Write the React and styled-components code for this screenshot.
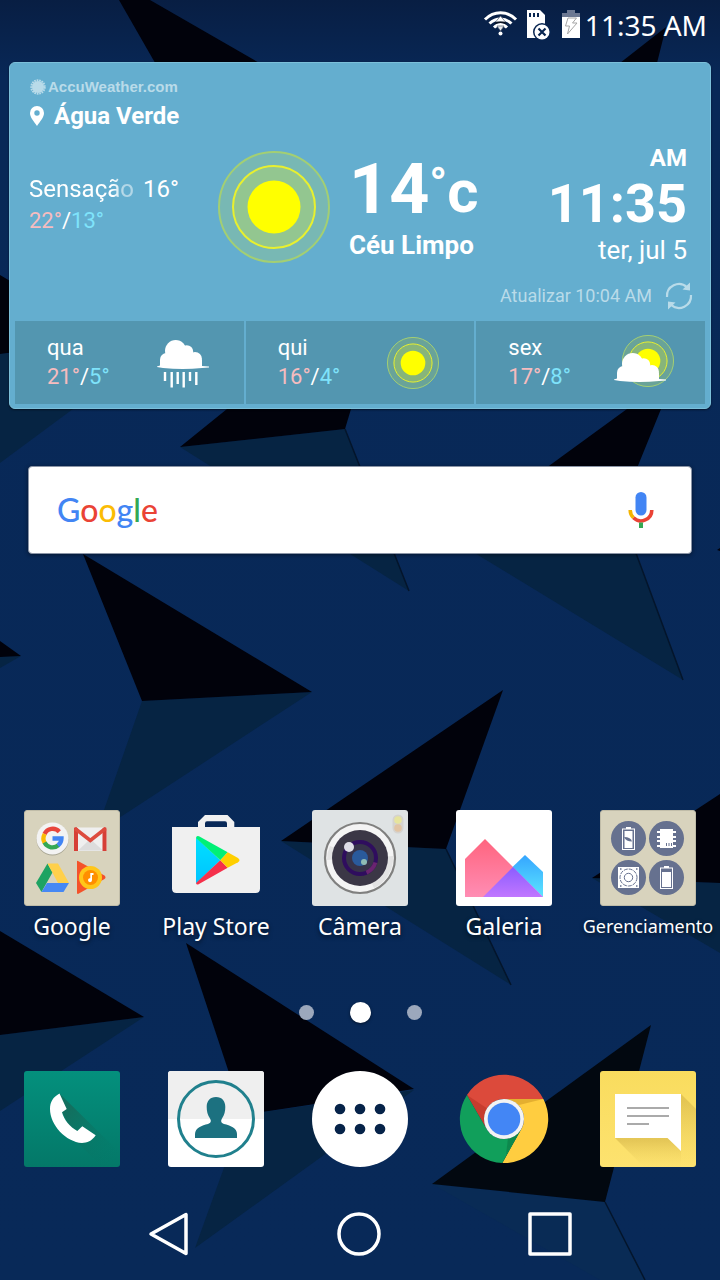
import React from 'react';
import styled, { createGlobalStyle } from 'styled-components';

const GlobalStyle = createGlobalStyle`
  *, *::before, *::after { box-sizing: border-box; }
  body { margin: 0; background: #082957; }
  button, input { font: inherit; color: inherit; border: 0; padding: 0; background: none; }
  button { cursor: pointer; }
  a { color: inherit; text-decoration: none; }
  svg { display: block; overflow: visible; }
`;

const Screen = styled.div`
  position: relative;
  min-height: 100vh;
  display: flex;
  flex-direction: column;
  overflow: hidden;
  color: #fff;
  font-family: Roboto, "Noto Sans", sans-serif;
  isolation: isolate;
`;

const WallpaperArt = styled.svg`
  position: absolute;
  inset: 0;
  width: 100%;
  height: 100%;
  z-index: -1;
`;

function Wallpaper() {
  return (
    <WallpaperArt viewBox="0 0 720 1280" preserveAspectRatio="xMidYMid slice" aria-hidden="true">
      <defs>
        <linearGradient id="night" x1="0" y1="0" x2="0" y2="1">
          <stop offset="0" stopColor="#081e43" />
          <stop offset="0.06" stopColor="#082857" />
          <stop offset="1" stopColor="#082958" />
        </linearGradient>
      </defs>
      <rect width="720" height="1280" fill="url(#night)" />
      <g fill="#062443">
        <path d="M0 354L110 346L150 352L73 409L0 463Z" />
        <path d="M180 447L345 429L409 591Z" />
        <path d="M450 538L620 510L683 680Z" />
        <path d="M0 657L21 656L0 668Z" />
        <path d="M142 701L312 692L96 833Z" />
        <path d="M281 841L446 849L511 985Z" />
        <path d="M592 878L720 883V953Z" />
        <path d="M0 1035L144 1017L0 1111Z" />
        <path d="M243 1115L414 1090L195 1248Z" />
      </g>
      <path d="M432 1184L605 1202L645 1280H600Z" fill="#092b55" />
      <g fill="#01020b">
        <path d="M119 0H150L268 68H158Z" />
        <path d="M666 27L620 63H657Z" />
        <path d="M0 275L110 340L0 354Z" />
        <path d="M180 447L227 409H351L345 429Z" />
        <path d="M450 538L627 409H661L620 510Z" />
        <path d="M0 641L21 656L0 657Z" />
        <path d="M720 548L717 550L720 551Z" />
        <path d="M83 554L312 692L142 701Z" />
        <path d="M503 690L446 849L281 841Z" />
        <path d="M720 794V883L592 878Z" />
        <path d="M0 931L144 1017L0 1035Z" />
        <path d="M186 943L414 1089L243 1115Z" />
        <path d="M651 1025L605 1202L432 1184Z" fill="#020810" />
      </g>
      <g fill="none" stroke="#04152b" strokeWidth="1.5">
        <path d="M345 429L409 591M620 510L683 680M446 849L511 985M605 1202L645 1280" />
      </g>
    </WallpaperArt>
  );
}

/* ---------- status bar ---------- */

const StatusBar = styled.header`
  height: 50px;
  padding-right: 13px;
  display: flex;
  align-items: center;
  justify-content: flex-end;
`;

const StatusIcon = styled.svg`
  width: ${(p) => p.$w}px;
  height: 30px;
  margin-right: ${(p) => p.$gap}px;
`;

const StatusTime = styled.time`
  font: 28px/38px "Noto Sans", sans-serif;
`;

function Status() {
  return (
    <StatusBar>
      <StatusIcon $w={33} $gap={10} viewBox="0 0 33 30" role="img" aria-label="Wi-Fi">
        <g fill="none" stroke="#fff" strokeWidth="3">
          <path d="M1 9.500C10 0.500 23 0.500 32 9.500" />
          <path d="M5.500 13.500C12 7.500 21 7.500 27.500 13.500" />
          <path d="M10 17.500C14 13.500 19 13.500 23 17.500" />
        </g>
        <path d="M11.500 12L16.500 6L21.500 12Z" fill="#fff" stroke="#555f70" strokeWidth="0.7" />
        <path d="M13 16L16.500 21L20 16Z" fill="#e9ebef" stroke="#555f70" strokeWidth="0.7" />
        <path d="M11 13.500Q16.500 11 22 13.500" stroke="#0a1220" strokeWidth="1.600" fill="none" />
        <circle cx="16.500" cy="23.500" r="2" fill="#fff" />
      </StatusIcon>
      <StatusIcon $w={24} $gap={11} viewBox="0 0 24 30" role="img" aria-label="Sem cartão SD">
        <path d="M0 0H13L18 5V28H0Z" fill="#fff" />
        <path d="M3 3V7M7 3V7M11 3V7" stroke="#082550" strokeWidth="2" />
        <circle cx="15" cy="22" r="9" fill="#082550" />
        <circle cx="15" cy="22" r="7.500" fill="#fff" />
        <path d="M11.500 18.500L18.500 25.500M18.500 18.500L11.500 25.500" stroke="#082550" strokeWidth="2.200" />
      </StatusIcon>
      <StatusIcon $w={18} $gap={5} viewBox="0 0 18 30" role="img" aria-label="Bateria carregando">
        <path d="M5 0H13V3H18V7H0V3H5Z" fill="#6c7892" />
        <path d="M0 7H18V28H0Z" fill="#fff" />
        <path d="M6 8L3.500 16H7.500L5.500 24L15 13H10.500L14.500 8Z" fill="none" stroke="#a6a6a6" strokeWidth="1" />
      </StatusIcon>
      <StatusTime dateTime="11:35">11:35 AM</StatusTime>
    </StatusBar>
  );
}

/* ---------- weather widget ---------- */

const WeatherCard = styled.section`
  margin: 12px 9px 0;
  padding: 15px 5px 4px;
  border: 1px solid #7cc0da;
  border-radius: 6px;
  background: #64aecf;
  box-shadow: 0 1px 2px rgba(0, 0, 0, 0.5);
`;

const Brand = styled.a`
  display: flex;
  align-items: center;
  gap: 2px;
  margin-left: 15px;
  color: #b9dbe9;
  font: bold 15px/18px "Liberation Sans", sans-serif;
`;

const Place = styled.h1`
  margin: 4px 0 0 14px;
  display: flex;
  align-items: center;
  gap: 9px;
  font-size: 24px;
  line-height: 32px;
  font-weight: 700;
`;

const Now = styled.div`
  margin-top: 12px;
  padding: 0 18px 0 14px;
  min-height: 120px;
  display: flex;
`;

const Feels = styled.div`
  width: 189px;
  margin-top: 29px;
  font-size: 24px;
  line-height: 32px;
`;

const FeelsLine = styled.div`
  display: flex;
  gap: 9px;
`;

const FadingText = styled.span`
  mask-image: linear-gradient(to right, #000 80%, rgba(0, 0, 0, 0.5) 90%);
`;

const Range = styled.div`
  font-size: 22px;
`;
const High = styled.span`
  color: #f6bcbf;
`;
const Low = styled.span`
  color: #7fe3fb;
`;

const SunIcon = styled.svg`
  width: ${(p) => p.$size}px;
  height: ${(p) => p.$size}px;
  flex: none;
  align-self: ${(p) => p.$align || 'center'};
`;

const Condition = styled.div`
  margin: 15px 0 0 19px;
`;

const Temperature = styled.div`
  display: flex;
  height: 60px;
  font-size: 70px;
  line-height: 60px;
  font-weight: 700;
`;
const Degree = styled.span`
  font-size: 46px;
  line-height: 50px;
`;
const Unit = styled.span`
  font-size: 60px;
  line-height: 66px;
`;
const ConditionName = styled.p`
  margin: 11px 0 0;
  font-size: 26px;
  line-height: 30px;
  font-weight: 700;
`;

const Clock = styled.div`
  margin-left: auto;
  text-align: right;
  font-weight: 700;
`;
const Meridiem = styled.div`
  font-size: 24px;
  line-height: 28px;
`;
const Hour = styled.div`
  font-size: 54px;
  line-height: 64px;
`;
const Today = styled.div`
  font-size: 26px;
  line-height: 28px;
  font-weight: 400;
`;

const Refresh = styled.button`
  margin: 16px 12px 9px auto;
  display: flex;
  align-items: center;
  gap: 13px;
  color: #b9dbe9;
  font-size: 18px;
  line-height: 32px;
`;

const Forecast = styled.ul`
  list-style: none;
  margin: 0;
  padding: 0;
  display: grid;
  grid-template-columns: repeat(3, 1fr);
  gap: 2px;
`;
const Day = styled.li`
  height: 83px;
  padding: 0 35px 2px 32px;
  display: flex;
  align-items: center;
  justify-content: space-between;
  background: #5396b0;
  font-size: 22px;
  line-height: 29px;
`;

function SunShapes({ cx, cy, k }) {
  return (
    <g>
      <circle cx={cx} cy={cy} r={55 * k} fill="rgba(255,255,0,0.13)" stroke="#a3cf73" strokeWidth={k < 1 ? 1 : 2} />
      <circle cx={cx} cy={cy} r={41 * k} fill="rgba(255,255,0,0.2)" stroke="#e8f02e" strokeWidth={k < 1 ? 1 : 2} />
      <circle cx={cx} cy={cy} r={26.5 * k} fill="#ff0" />
    </g>
  );
}

function CloudShapes() {
  return (
    <g fill="#fff">
      <circle cx="18.700" cy="13.700" r="10.700" />
      <circle cx="29.700" cy="14.700" r="6.500" />
      <circle cx="38" cy="22" r="7" />
      <circle cx="9.500" cy="22.500" r="6.500" />
      <path d="M3 23H45V29L52 29.500V30.500L45 31Q26 33 6 31L0 30V29.500L3 28.500Z" />
      <rect x="12" y="14" width="24" height="12" />
    </g>
  );
}

function DayIcon({ kind }) {
  return (
    <SunIcon $size={52} viewBox="0 0 52 52" aria-hidden="true">
      {kind === 'sun' && <SunShapes cx={26} cy={27} k={0.465} />}
      {kind === 'rain' && (
        <g transform="translate(0 1)">
          <CloudShapes />
          <path
            d="M8 35V44M14.700 35V50.500M20.700 35V47M26.700 35V50.500M33 35V44M39.300 35V48"
            stroke="#fff"
            strokeWidth="2.400"
          />
        </g>
      )}
      {kind === 'partly' && (
        <g>
          <SunShapes cx={30} cy={25} k={0.465} />
          <g transform="translate(-4 14)">
            <CloudShapes />
          </g>
        </g>
      )}
    </SunIcon>
  );
}

const DAYS = [
  { name: 'qua', high: '21°', low: '5°', kind: 'rain' },
  { name: 'qui', high: '16°', low: '4°', kind: 'sun' },
  { name: 'sex', high: '17°', low: '8°', kind: 'partly' },
];

function Weather() {
  return (
    <WeatherCard>
      <Brand href="#accuweather">
        <svg width="16" height="16" viewBox="0 0 16 16" aria-hidden="true">
          <circle cx="8" cy="8" r="6" fill="currentColor" />
          <circle cx="8" cy="8" r="6.700" fill="none" stroke="currentColor" strokeWidth="2" strokeDasharray="1.700 0.800" />
        </svg>
        AccuWeather.com
      </Brand>
      <Place>
        <svg width="16" height="20" viewBox="0 0 16 20" aria-hidden="true">
          <path
            d="M8 0A7 7 0 0 1 15 7C15 11.500 11 15.500 8 20C5 15.500 1 11.500 1 7A7 7 0 0 1 8 0ZM8 4.300A2.700 2.700 0 1 0 8 9.700A2.700 2.700 0 1 0 8 4.300Z"
            fill="#fff"
            fillRule="evenodd"
          />
        </svg>
        Água Verde
      </Place>
      <Now>
        <Feels>
          <FeelsLine>
            <FadingText>Sensação</FadingText>
            <span>16°</span>
          </FeelsLine>
          <Range>
            <High>22°</High>/<Low>13°</Low>
          </Range>
        </Feels>
        <SunIcon $size={112} $align="flex-end" viewBox="0 0 112 112" role="img" aria-label="Sol">
          <SunShapes cx={56} cy={55} k={1} />
        </SunIcon>
        <Condition>
          <Temperature>
            14<Degree>°</Degree>
            <Unit>c</Unit>
          </Temperature>
          <ConditionName>Céu Limpo</ConditionName>
        </Condition>
        <Clock>
          <Meridiem>AM</Meridiem>
          <Hour>11:35</Hour>
          <Today>ter, jul 5</Today>
        </Clock>
      </Now>
      <Refresh type="button">
        Atualizar 10:04 AM
        <svg width="28" height="28" viewBox="0 0 28 28" aria-hidden="true">
          <path d="M2 15A12 12 0 0 1 22 5.200M26 13A12 12 0 0 1 6 22.800" fill="none" stroke="currentColor" strokeWidth="2.200" />
          <path d="M25 0.500V8.500L17.500 7.500ZM3 27.500V19.500L10.500 20.500Z" fill="currentColor" />
        </svg>
      </Refresh>
      <Forecast>
        {DAYS.map((d) => (
          <Day key={d.name}>
            <div>
              {d.name}
              <Range>
                <High>{d.high}</High>/<Low>{d.low}</Low>
              </Range>
            </div>
            <DayIcon kind={d.kind} />
          </Day>
        ))}
      </Forecast>
    </WeatherCard>
  );
}

/* ---------- search ---------- */

const SearchBar = styled.form`
  margin: 57px 28px 0;
  height: 88px;
  padding: 0 37px 0 28px;
  display: flex;
  align-items: center;
  border: 1px solid #8a94a6;
  border-radius: 4px;
  background: #fff;
  box-shadow: 0 1px 4px rgba(0, 0, 0, 0.45);
`;
const Logo = styled.label`
  font: 500 32px/40px Lato, sans-serif;
`;
const Letter = styled.span`
  color: ${(p) => p.$color};
`;
const Query = styled.input`
  flex: 1;
  min-width: 0;
  height: 60px;
  outline: 0;
  color: #333;
`;

const LETTERS = [
  ['G', '#4285f4'],
  ['o', '#ea4335'],
  ['o', '#fbbc05'],
  ['g', '#4285f4'],
  ['l', '#34a853'],
  ['e', '#ea4335'],
];

function Search() {
  return (
    <SearchBar role="search">
      <Logo htmlFor="query">
        {LETTERS.map(([c, color], i) => (
          <Letter key={i} $color={color}>
            {c}
          </Letter>
        ))}
      </Logo>
      <Query id="query" type="text" />
      <button type="button" aria-label="Pesquisa por voz">
        <svg width="26" height="38" viewBox="0 0 26 38" aria-hidden="true">
          <rect x="7.500" y="1" width="11" height="23.500" rx="5.500" fill="#4285f4" />
          <path d="M2.200 19A10.800 10.800 0 0 0 5.500 26.800" fill="none" stroke="#f4b400" strokeWidth="3.600" />
          <path d="M5.500 26.800A10.800 10.800 0 0 0 23.800 19" fill="none" stroke="#ea4335" strokeWidth="3.600" />
          <path d="M13 31.500V37" stroke="#34a853" strokeWidth="4" />
        </svg>
      </button>
    </SearchBar>
  );
}

/* ---------- app icons ---------- */

function FolderTile({ children }) {
  return (
    <g>
      <rect x="0.500" y="0.500" width="95" height="95" rx="2.500" fill="#d8d3bd" stroke="#c0bca8" />
      {children}
    </g>
  );
}

function GoogleFolder() {
  return (
    <FolderTile>
      <circle cx="28.500" cy="29.500" r="16" fill="#a9a694" />
      <circle cx="28.500" cy="28.500" r="16" fill="#f3f3f3" />
      <g fill="none" strokeWidth="4.300">
        <path d="M35.300 21.700A9 9 0 0 0 20.500 24" stroke="#e8453c" />
        <path d="M20.700 24A9 9 0 0 0 20.700 33" stroke="#fbbc05" />
        <path d="M20.500 32.600A9 9 0 0 0 34.500 35.100" stroke="#34a853" />
        <path d="M28.500 28.500H37.500A9 9 0 0 1 34 35.500" stroke="#4285f4" />
      </g>
      <rect x="50" y="17.500" width="32.500" height="23.500" rx="1.500" fill="#efefef" />
      <path d="M54 40.500L66.300 29L79 40.500Z" fill="#dcdcdc" />
      <path d="M50 41V18.500Q50 17 52 17.200L54 18.500V41ZM82.500 41V18.500Q82.500 17 80.500 17.200L78.500 18.500V41Z" fill="#d63f36" />
      <path d="M51 18.500L66.300 30.500L81.500 18.500" fill="none" stroke="#dd4b3e" strokeWidth="3.600" />
      <path d="M23.500 53.500L12 73L17.500 82L28.500 62.500Z" fill="#1ea362" />
      <path d="M23.500 53.500H34L45 73H34Z" fill="#ffd04b" />
      <path d="M17.500 82L23 73H45L39.500 82Z" fill="#4688f4" />
      <path d="M53 51Q53 50.500 54 51L80.500 65.500Q82.500 67.500 80.500 69L54 84Q53 84 53 83Z" fill="#f4522a" />
      <circle cx="66.500" cy="67.500" r="11.500" fill="#ffc61a" />
      <circle cx="66.500" cy="67.500" r="7.500" fill="#ff8f00" />
      <path d="M66.300 63H69.500V65H68V70A2 2 0 1 1 66.300 68.200Z" fill="#fff" />
    </FolderTile>
  );
}

function PlayStore() {
  return (
    <g>
      <defs>
        <linearGradient id="playBlue" x1="0" y1="0" x2="0" y2="1">
          <stop offset="0" stopColor="#00e0ff" />
          <stop offset="1" stopColor="#00c3ff" />
        </linearGradient>
      </defs>
      <path
        d="M30 18V12L37 5H59.500L66.300 12V18ZM37 18H59V13.500Q59 11.300 57 11.300H39Q37 11.300 37 13.500Z"
        fill="#f1f1f1"
        fillRule="evenodd"
      />
      <path d="M4 17H92V78.500Q92 83 87.500 83H8.500Q4 83 4 78.500Z" fill="#f0f0f0" />
      <path d="M28 27.500L52.300 50.300L28 73.500Z" fill="url(#playBlue)" />
      <path d="M28 28Q28.500 25 31 26.300L59.700 42.300L52.300 50.300Z" fill="#00f076" />
      <path d="M28 73Q28.500 75.500 31 74L59.700 57.700L52.300 50.300Z" fill="#f5304b" />
      <path d="M59.700 42.300L70 48Q73 50.300 70 52.300L59.700 57.700L52.300 50.300Z" fill="#ffcf00" />
    </g>
  );
}

function Camera() {
  return (
    <g>
      <rect width="96" height="96" rx="3" fill="#dfe3e4" />
      <circle cx="48" cy="48" r="35" fill="#f4f4f4" stroke="#80807f" strokeWidth="2.200" />
      <path d="M48 48L81 46A33 33 0 0 1 62 78ZM48 48L15 50A33 33 0 0 1 18 36Z" fill="#e3e3e3" />
      <circle cx="48" cy="48" r="28" fill="#3b3746" />
      <circle cx="48" cy="48" r="16" fill="#37334a" stroke="#2f0d5e" strokeWidth="4" />
      <path d="M63.400 52.500A16 16 0 0 1 54.500 62.600" fill="none" stroke="#6a2470" strokeWidth="4" />
      <circle cx="48" cy="48" r="8" fill="#2a5a9c" />
      <circle cx="52" cy="52" r="3" fill="#90bbb5" />
      <circle cx="37" cy="37" r="5" fill="#dedde6" />
      <rect x="80.500" y="4.500" width="11" height="19" rx="5.500" fill="#d5d3cf" />
      <circle cx="86" cy="10" r="3.800" fill="#e6e49d" />
      <circle cx="86" cy="18" r="3.800" fill="#e1c4a4" />
    </g>
  );
}

function Gallery() {
  return (
    <g>
      <defs>
        <linearGradient id="pink" x1="0" y1="0" x2="0" y2="1">
          <stop offset="0" stopColor="#ff647e" />
          <stop offset="1" stopColor="#ff8db4" />
        </linearGradient>
        <linearGradient id="sky" x1="0" y1="0" x2="0" y2="1">
          <stop offset="0" stopColor="#35a5ff" />
          <stop offset="1" stopColor="#5ce6ff" />
        </linearGradient>
        <linearGradient id="violet" x1="0" y1="0" x2="0" y2="1">
          <stop offset="0" stopColor="#8b5cff" />
          <stop offset="1" stopColor="#c177ff" />
        </linearGradient>
      </defs>
      <rect width="96" height="96" rx="3" fill="#fff" />
      <path d="M9 49L29 29L87 87H9Z" fill="url(#pink)" />
      <path d="M56.500 57L69 45L87 62V87Z" fill="url(#sky)" />
      <path d="M57 57L27 87H87Z" fill="url(#violet)" />
    </g>
  );
}

function ManagementFolder() {
  return (
    <FolderTile>
      <g fill="#66718f">
        <circle cx="28.500" cy="28.500" r="17.500" />
        <circle cx="66.500" cy="28.500" r="17.500" />
        <circle cx="28.500" cy="67.500" r="17.500" />
        <circle cx="66.500" cy="67.500" r="17.500" />
      </g>
      <rect x="22.500" y="19" width="12" height="20.500" fill="none" stroke="#fff" />
      <path d="M26 17H31V19H26ZM24.500 21H32.500V38H24.500Z" fill="#fff" />
      <path d="M24 27Q31 27 32 31.500Q26 31.500 24 27" fill="#66718f" />
      <path d="M60 19H73V38H60ZM57 21H76V23H57ZM57 26H76V28H57ZM57 30H76V32H57ZM57 35H76V37H57Z" fill="#fff" />
      <path d="M66.500 33V36M69 33V36M71.500 33V36" stroke="#66718f" />
      <rect x="18" y="57" width="21" height="21" fill="#fff" />
      <g fill="none" stroke="#66718f">
        <circle cx="28.500" cy="67.500" r="8.500" strokeDasharray="4 1" />
        <circle cx="28.500" cy="67.500" r="4.200" />
      </g>
      <path d="M20 59H21.500M36 59H37.500M20 76H21.500M36 76H37.500" stroke="#66718f" strokeWidth="1.500" />
      <rect x="60.500" y="58" width="12" height="20.500" fill="none" stroke="#fff" />
      <path d="M64 56H69V58H64ZM62 62H71V77H62Z" fill="#fff" />
    </FolderTile>
  );
}

function Phone() {
  return (
    <g>
      <defs>
        <linearGradient id="green" x1="0" y1="0" x2="0" y2="1">
          <stop offset="0" stopColor="#04907d" />
          <stop offset="1" stopColor="#047868" />
        </linearGradient>
        <linearGradient id="phoneShade" x1="0.200" y1="0.200" x2="0.900" y2="0.900">
          <stop offset="0" stopColor="#12705f" />
          <stop offset="1" stopColor="#047868" stopOpacity="0" />
        </linearGradient>
      </defs>
      <rect width="96" height="96" rx="3" fill="url(#green)" />
      <path d="M35.500 22.500L96 82V96H78L54 72L38 41Z" fill="url(#phoneShade)" />
      <path
        d="M35.500 22.500L42.700 38L38 41.300C40 49 46 56 53.300 60L58.300 55.300L71.700 64.300C68 70 63 72 58 72C42 71 26 54 26 38C26 31 29 26 35.500 22.500Z"
        fill="#fff"
      />
    </g>
  );
}

function Contacts() {
  return (
    <g>
      <rect width="96" height="96" rx="3" fill="#fff" />
      <path d="M0 48V3Q0 0 3 0H93Q96 0 96 3V48Z" fill="#efefef" />
      <circle cx="48" cy="48" r="37.500" fill="none" stroke="#20808d" strokeWidth="3" />
      <path
        d="M27 67V63C27 57 34 54.500 40 53C43 52 43.500 50 42 47.500C39.500 44 38.700 40 38.700 36C38.700 30 42 26 48 26S57.300 30 57.300 36C57.300 40 56.500 44 54 47.500C52.500 50 53 52 56 53C62 54.500 69 57 69 63V67Z"
        fill="#1c7180"
      />
    </g>
  );
}

function AllApps() {
  return (
    <g>
      <circle cx="48" cy="48" r="48" fill="#fff" />
      {[38, 58].map((y) => [28, 48, 68].map((x) => <circle key={`${x}-${y}`} cx={x} cy={y} r="5.300" fill="#062349" />))}
    </g>
  );
}

function Chrome() {
  return (
    <g>
      <path d="M11 24A44 44 0 0 1 87.400 28H48A20 20 0 0 0 30.700 58Z" fill="#dc4a3b" />
      <path d="M87.400 28A44 44 0 0 1 46.300 92L65.300 58A20 20 0 0 0 48 28Z" fill="#ffcd40" />
      <path d="M46.300 92A44 44 0 0 1 11 24L30.700 58A20 20 0 0 0 65.300 58Z" fill="#119f5b" />
      <path d="M11 24L30.700 58L28.500 49L32 38Z" fill="#b93327" opacity="0.600" />
      <path d="M48 28H87.400L63 34Z" fill="#d9a32a" opacity="0.700" />
      <path d="M65.300 58L50 84L52 67Z" fill="#0b7f47" opacity="0.700" />
      <circle cx="48" cy="48" r="20" fill="#f3f3f3" />
      <circle cx="48" cy="48" r="16.300" fill="#4386f5" />
    </g>
  );
}

function Messages() {
  return (
    <g>
      <defs>
        <linearGradient id="yellow" x1="0" y1="0" x2="0" y2="1">
          <stop offset="0" stopColor="#f9dc5e" />
          <stop offset="1" stopColor="#fde26f" />
        </linearGradient>
        <linearGradient id="shade" x1="0" y1="0.100" x2="0" y2="1">
          <stop offset="0" stopColor="#c9a840" stopOpacity="0.450" />
          <stop offset="1" stopColor="#e8cd5c" stopOpacity="0" />
        </linearGradient>
      </defs>
      <rect width="96" height="96" rx="3" fill="url(#yellow)" />
      <path d="M81 23L96 38V96H81Z" fill="url(#shade)" />
      <path d="M15 67H81V96H44Z" fill="url(#shade)" />
      <path d="M15 23H81V80L67.500 67H15Z" fill="#fff" />
      <path d="M27 37H69M27 45H69M27 53H49" stroke="#aaa" strokeWidth="2" />
    </g>
  );
}

/* ---------- home rows ---------- */

const AppRow = styled.nav`
  margin-top: ${(p) => p.$top};
  display: grid;
  grid-template-columns: repeat(5, 1fr);
`;
const AppButton = styled.button`
  display: flex;
  flex-direction: column;
  align-items: center;
  gap: 4px;
`;
const AppIcon = styled.svg`
  width: 96px;
  height: 96px;
`;
const AppLabel = styled.span`
  white-space: nowrap;
  font-family: "Noto Sans", sans-serif;
  font-size: ${(p) => (p.$small ? 18 : 23)}px;
  line-height: 32px;
  text-shadow: 0 2px 4px rgba(0, 0, 0, 0.6);
`;

const APPS = [
  { label: 'Google', Icon: GoogleFolder },
  { label: 'Play Store', Icon: PlayStore },
  { label: 'Câmera', Icon: Camera },
  { label: 'Galeria', Icon: Gallery },
  { label: 'Gerenciamento', Icon: ManagementFolder, small: true },
];

const DOCK = [
  { label: 'Telefone', Icon: Phone },
  { label: 'Contatos', Icon: Contacts },
  { label: 'Aplicativos', Icon: AllApps },
  { label: 'Chrome', Icon: Chrome },
  { label: 'Mensagens', Icon: Messages },
];

const Pager = styled.div`
  margin-top: 56px;
  height: 28px;
  display: flex;
  align-items: center;
  justify-content: center;
  gap: 36px;
`;
const PageDot = styled.button`
  width: ${(p) => (p.$active ? 21 : 15)}px;
  height: ${(p) => (p.$active ? 21 : 15)}px;
  border-radius: 50%;
  background: ${(p) => (p.$active ? '#fff' : '#9ca8bc')};
  box-shadow: ${(p) => (p.$active ? '0 1px 3px rgba(0, 0, 0, 0.5)' : 'none')};
`;

const SystemBar = styled.nav`
  margin-top: 21px;
  height: 92px;
  padding: 0 75px 0 73px;
  display: grid;
  grid-template-columns: repeat(3, 1fr);
`;
const SystemButton = styled.button`
  display: flex;
  align-items: center;
  justify-content: center;
`;

const SYSTEM = [
  { label: 'Voltar', d: 'M41 3.500V42.500L6 23Z' },
  { label: 'Início', d: 'M23 3A20 20 0 1 1 23 43A20 20 0 1 1 23 3Z' },
  { label: 'Recentes', d: 'M3 3H43V43H3Z' },
];

export default function App() {
  return (
    <Screen>
      <GlobalStyle />
      <Wallpaper />
      <Status />
      <Weather />
      <Search />
      <AppRow $top="auto" aria-label="Aplicativos">
        {APPS.map(({ label, Icon, small }) => (
          <AppButton key={label} type="button">
            <AppIcon viewBox="0 0 96 96" aria-hidden="true">
              <Icon />
            </AppIcon>
            <AppLabel $small={small}>{label}</AppLabel>
          </AppButton>
        ))}
      </AppRow>
      <Pager>
        <PageDot type="button" aria-label="Página 1" />
        <PageDot type="button" aria-label="Página 2" $active />
        <PageDot type="button" aria-label="Página 3" />
      </Pager>
      <AppRow $top="45px" aria-label="Favoritos">
        {DOCK.map(({ label, Icon }) => (
          <AppButton key={label} type="button" aria-label={label}>
            <AppIcon viewBox="0 0 96 96" aria-hidden="true">
              <Icon />
            </AppIcon>
          </AppButton>
        ))}
      </AppRow>
      <SystemBar aria-label="Navegação">
        {SYSTEM.map(({ label, d }) => (
          <SystemButton key={label} type="button" aria-label={label}>
            <svg width="46" height="46" viewBox="0 0 46 46" aria-hidden="true">
              <path d={d} fill="none" stroke="#fff" strokeWidth="3.500" strokeLinejoin="round" />
            </svg>
          </SystemButton>
        ))}
      </SystemBar>
    </Screen>
  );
}
